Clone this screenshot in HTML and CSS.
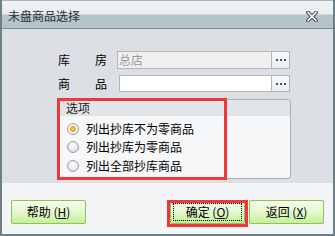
FILE: index.html
```html
<!DOCTYPE html>
<html lang="zh-CN">
<head>
<meta charset="utf-8">
<title>未盘商品选择</title>
<link rel="stylesheet" href="styles.css">
</head>
<body>
<div class="window">
  <div class="titlebar">
    <span class="title">未盘商品选择</span>
    <svg class="close" width="12" height="11" viewBox="0 0 12 11">
      <path d="M2 1.5 L10 9.5 M10 1.5 L2 9.5" stroke="#3c4448" stroke-width="3.6" stroke-linecap="square" fill="none"/>
      <path d="M2 1.5 L10 9.5 M10 1.5 L2 9.5" stroke="#ffffff" stroke-width="1.6" stroke-linecap="square" fill="none"/>
    </svg>
  </div>
  <div class="content">
    <div class="row">
      <span class="label"><span>库</span><span>房</span></span>
      <div class="field disabled"><span class="value">总店</span></div>
      <div class="dots"><i></i><i></i><i></i></div>
    </div>
    <div class="row row2">
      <span class="label"><span>商</span><span>品</span></span>
      <div class="field"></div>
      <div class="dots"><i></i><i></i><i></i></div>
    </div>
    <div class="group">
      <div class="group-head">选项</div>
      <div class="group-body">
        <div class="radio"><span class="circle on"></span>列出抄库不为零商品</div>
        <div class="radio"><span class="circle"></span>列出抄库为零商品</div>
        <div class="radio"><span class="circle"></span>列出全部抄库商品</div>
      </div>
    </div>
    <div class="mark mark-group"></div>
  </div>
  <div class="footer">
    <button class="btn">帮助 (<u>H</u>)</button>
    <button class="btn btn-ok"><span class="focus">确定 (<u>O</u>)</span></button>
    <button class="btn">返回 (<u>X</u>)</button>
    <div class="mark mark-ok"></div>
  </div>
</div>
</body>
</html>
```

FILE: styles.css
```css
* { box-sizing: border-box; }
html, body { margin: 0; padding: 0; }
body {
  width: 335px;
  height: 236px;
  overflow: hidden;
  font-family: "Noto Sans CJK SC", "Liberation Sans", sans-serif;
  font-size: 12px;
  color: #000;
  background: #ffffff;
}
.window {
  width: 335px;
  height: 236px;
  border: 2px solid #6d7f87;
  border-top: 0;
  display: flex;
  flex-direction: column;
}
.titlebar {
  height: 29px;
  flex: none;
  display: flex;
  align-items: center;
  padding-left: 6px;
  padding-top: 3px;
  border-top: 1px solid #a9b7bc;
  border-bottom: 1px solid #7b8d94;
  background: linear-gradient(#f1f4f5 0, #e8edee 13px, #b6c6cb 14px, #b3c3c8 100%);
}
.title {
  font-size: 12px;
  color: #2a3034;
  line-height: 12px;
}
.close {
  margin-left: auto;
  margin-right: 15px;
  margin-top: 0;
}
.content {
  position: relative;
  height: 154px;
  flex: none;
  background: #dcdfe3;
  padding: 22px 0 0 56px;
}
.row {
  display: flex;
  align-items: stretch;
  height: 18px;
}
.row2 { margin-top: 6px; height: 17px; }
.label {
  width: 49px;
  display: flex;
  justify-content: space-between;
  align-items: center;
  margin-right: 10px;
  line-height: 12px;
}
.row2 .label { margin-right: 12px; }
.field {
  flex: none;
  width: 155px;
  border: 1px solid #b2b6ba;
  background: #ffffff;
  display: flex;
  align-items: center;
  padding-left: 1px;
}
.row2 .field { width: 153px; }
.field.disabled { background: #f0f0f0; }
.value { color: #9a9a9a; line-height: 12px; }
.dots {
  width: 18px;
  border: 1px solid #b2b6ba;
  border-left: 0;
  background: linear-gradient(#f8f9fb, #e9edf1);
  display: flex;
  align-items: center;
  justify-content: center;
  gap: 2px;
}
.dots i {
  width: 2px;
  height: 2px;
  background: #4e5458;
}
.group {
  margin-top: 7px;
  margin-left: -1px;
  width: 234px;
  height: 80px;
  border: 1px solid #a9aeb3;
  border-radius: 3px;
  background: #f6f7f9;
  overflow: hidden;
}
.group-head {
  height: 16px;
  background: #e2e5e8;
  padding-left: 8px;
  display: flex;
  align-items: center;
  line-height: 12px;
  color: #1a1a1a;
}
.group-body {
  padding: 3.5px 0 0 9px;
}
.radio {
  height: 18.5px;
  display: flex;
  align-items: center;
  line-height: 12px;
}
.circle {
  width: 12px;
  height: 12px;
  border-radius: 50%;
  border: 1px solid #9aa0a6;
  background: radial-gradient(circle at 50% 35%, #ffffff 0, #e4e6e8 60%, #cfd2d5 100%);
  margin-right: 7px;
  flex: none;
  position: relative;
}
.circle.on {
  background: radial-gradient(circle at 50% 50%, #fbd24a 0, #f2a514 2.5px, #f7f8f9 3.5px, #e3e5e8 100%);
}
.footer {
  flex: 1;
  position: relative;
  background: #f3f5f7;
  display: flex;
  align-items: flex-start;
  gap: 4px;
  padding: 17px 9px 0 9px;
}
.btn {
  width: 75px;
  height: 24px;
  border: 1px solid #89c455;
  border-radius: 2px;
  background: linear-gradient(#f5fdea, #e4f8cc 50%, #c6ef9c);
  font-family: inherit;
  font-size: 12px;
  color: #000;
  padding: 0;
  display: flex;
  align-items: center;
  justify-content: center;
  line-height: 12px;
}
.btn u { text-decoration-thickness: 1px; text-underline-offset: 1px; }
.btn-ok { margin-left: auto; padding: 2px; }
.focus {
  width: 100%;
  height: 100%;
  border: 1px dotted #000;
  display: flex;
  align-items: center;
  justify-content: center;
}
.mark {
  position: absolute;
  border: 3px solid #f0363a;
  pointer-events: none;
}
.mark-group {
  left: 55px;
  top: 69px;
  width: 170px;
  height: 82px;
}
.mark-ok {
  left: 165px;
  top: 17px;
  width: 81px;
  height: 27px;
}
```
